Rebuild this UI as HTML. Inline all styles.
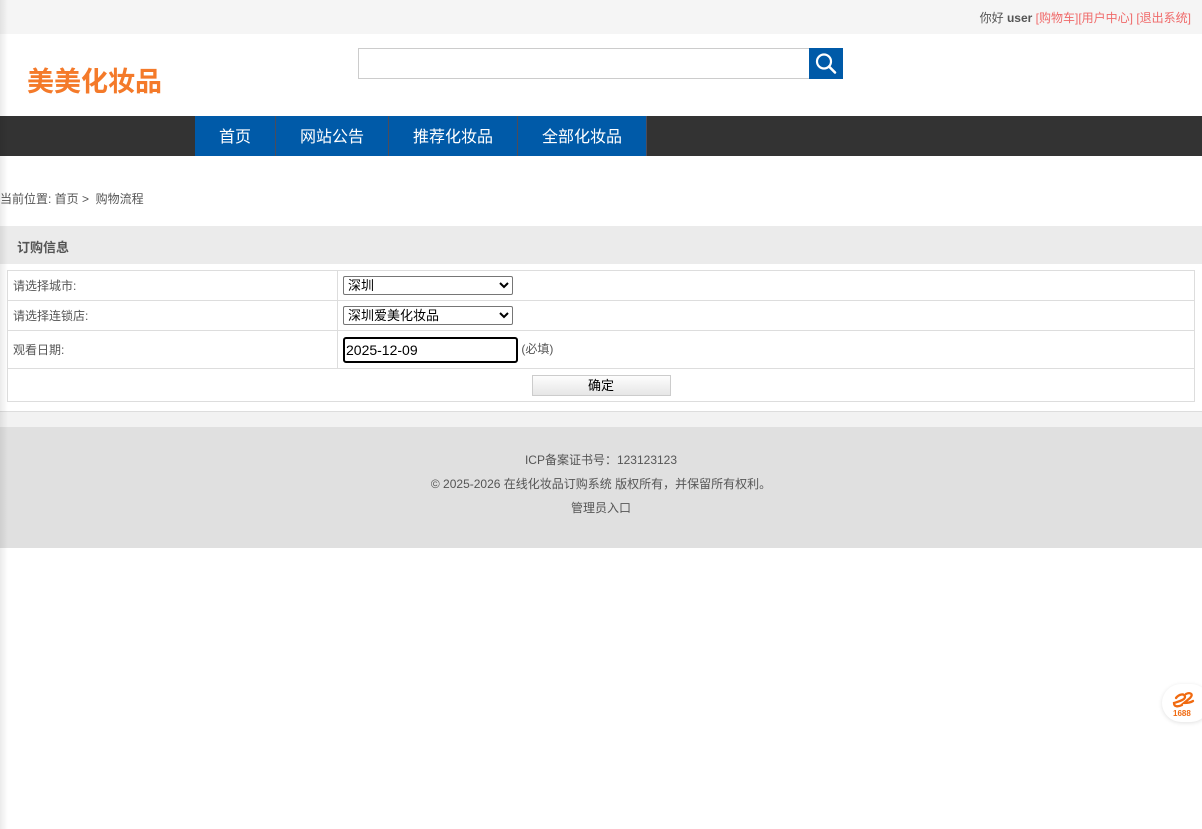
<!DOCTYPE html>
<html><head><meta charset="utf-8"><style>
*{margin:0;padding:0;box-sizing:border-box}
body{width:1202px;height:829px;background:#fff;font-family:"Liberation Sans","Noto Sans CJK SC",sans-serif;font-size:12px;color:#555;position:relative;overflow:hidden}
.top{height:34px;background:#f5f5f5;text-align:right;padding:9px 11px 0 0;font-size:12px;color:#555}
.top b{color:#555}
.top a{color:#f06a6a;text-decoration:none}
.logo{position:absolute;left:27px;top:60px;font-size:27px;font-weight:bold;color:#f47a2a;letter-spacing:0}
.search{position:absolute;left:358px;top:48px;width:452px;height:31px;border:1px solid #ccc;background:#fff}
.sbtn{position:absolute;left:809px;top:48px;width:34px;height:31px;background:#005aa8}
.nav{position:absolute;left:0;top:116px;width:1202px;height:40px;background:#333}
.nav div{position:absolute;top:0;height:40px;background:#005aa8;color:#fff;font-size:16px;text-align:center;line-height:44px;border-right:1px solid #4c4c5a}
.bc{position:absolute;left:0;top:190px;font-size:12px;color:#555}
.ph{position:absolute;left:0;top:226px;width:1202px;height:38px;background:#ebebeb;font-size:13px;font-weight:bold;color:#555;padding:11px 0 0 17px}
table{position:absolute;left:7px;top:270px;width:1188px;border-collapse:collapse}
td{border:1px solid #ddd;padding:0 5px;font-size:12px;color:#555}
select{font-family:"Liberation Sans","Noto Sans CJK SC",sans-serif;font-size:13px;width:170px;height:19px;border:1px solid #767676;border-radius:2px;background:#fff;color:#000}
.inp{display:inline-block;width:175px;height:26px;border:2px solid #000;border-radius:3px;font-size:14px;color:#000;padding:3px 0 0 1px;vertical-align:middle}
.btn{display:inline-block;width:139px;height:21px;border:1px solid #ccc;background:linear-gradient(#fdfdfd,#e6e6e6);font-size:13px;color:#000;text-align:center;line-height:19px}
.line{position:absolute;left:0;top:411px;width:1202px;height:16px;background:#f2f2f2;border-top:1px solid #ddd}
.foot{position:absolute;left:0;top:427px;width:1202px;height:121px;background:#e0e0e0;text-align:center;font-size:12px;color:#555;padding-top:21px;line-height:24px}
.shadow{position:absolute;left:0;top:0;width:8px;height:829px;background:linear-gradient(90deg,rgba(0,0,0,.08),rgba(0,0,0,0))}
</style></head><body>
<div class="top">你好 <b>user</b> <a>[购物车]</a><a>[用户中心]</a> <a>[退出系统]</a></div>
<div class="logo">美美化妆品</div>
<div class="search"></div>
<div class="sbtn"><svg width="34" height="31" viewBox="0 0 34 31"><circle cx="15" cy="13.5" r="7" fill="none" stroke="#fff" stroke-width="2.2"/><line x1="20" y1="18.5" x2="26" y2="24.5" stroke="#fff" stroke-width="2.6" stroke-linecap="round"/></svg></div>
<div class="nav">
<div style="left:195px;width:81px">首页</div>
<div style="left:276px;width:113px">网站公告</div>
<div style="left:389px;width:129px">推荐化妆品</div>
<div style="left:518px;width:129px">全部化妆品</div>
</div>
<div class="bc">当前位置: 首页 &gt; &nbsp;购物流程</div>
<div class="ph">订购信息</div>
<table>
<tr style="height:30px"><td style="width:330px">请选择城市:</td><td><select><option>深圳</option></select></td></tr>
<tr style="height:30px"><td>请选择连锁店:</td><td><select><option>深圳爱美化妆品</option></select></td></tr>
<tr style="height:38px"><td>观看日期:</td><td><span class="inp">2025-12-09</span> (必填)</td></tr>
<tr style="height:33px"><td colspan="2" style="text-align:center"><span class="btn">确定</span></td></tr>
</table>
<div class="line"></div>
<div class="foot">ICP备案证书号：123123123<br>© 2025-2026 在线化妆品订购系统 版权所有，并保留所有权利。<br>管理员入口</div>
<div style="position:absolute;left:1162px;top:684px;width:48px;height:38px;border-radius:19px;background:#fff;box-shadow:0 1px 4px rgba(0,0,0,.12)">
<svg width="40" height="36" viewBox="0 0 40 36"><path d="M14 14c3-4 9-5 9-1 0 3-8 5-11 6 0 4 4 4 8 2M24 10c4-2 8 0 4 4l-6 5c3 0 6 0 9-2" fill="none" stroke="#f06a10" stroke-width="2.3" stroke-linecap="round"/><text x="11" y="32" font-size="8" font-weight="bold" fill="#f06a10" font-family="Liberation Sans,sans-serif">1688</text></svg></div>
<div class="shadow"></div>
</body></html>
